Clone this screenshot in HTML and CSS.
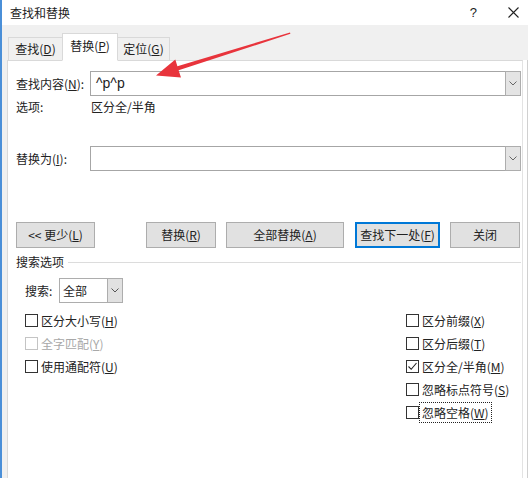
FILE: index.html
```html
<!DOCTYPE html>
<html lang="zh-CN">
<head>
<meta charset="utf-8">
<title>查找和替换</title>
<link rel="stylesheet" href="styles.css">
</head>
<body>
<div class="window">
  <div class="dlg">
    <div class="titlebar">
      <span class="title">查找和替换</span>
      <span class="help">?</span>
      <span class="close"><svg width="11" height="11" viewBox="0 0 11 11"><path d="M0.5 0.5L10.5 10.5M10.5 0.5L0.5 10.5" stroke="#222" stroke-width="1.1" fill="none"/></svg></span>
    </div>
    <div class="tabband">
      <div class="tab t1">查找(<u>D</u>)</div>
      <div class="tab t2 active">替换(<u>P</u>)</div>
      <div class="tab t3">定位(<u>G</u>)</div>
    </div>
    <div class="body-area">
      <div class="gutter"></div>
      <div class="page">
        <div class="field-row find">
          <span class="flabel">查找内容(<u>N</u>):</span>
          <div class="combo">
            <span class="combo-text">^p^p</span>
            <span class="combo-btn"><svg width="8" height="5" viewBox="0 0 8 5"><path d="M0.5 0.5L4 4L7.5 0.5" stroke="#666" stroke-width="1" fill="none"/></svg></span>
          </div>
        </div>
        <div class="opts-row">
          <span class="flabel">选项:</span>
          <span class="opts-val">区分全/半角</span>
        </div>
        <div class="field-row replace">
          <span class="flabel">替换为(<u>I</u>):</span>
          <div class="combo">
            <span class="combo-text"></span>
            <span class="combo-btn"><svg width="8" height="5" viewBox="0 0 8 5"><path d="M0.5 0.5L4 4L7.5 0.5" stroke="#666" stroke-width="1" fill="none"/></svg></span>
          </div>
        </div>
        <div class="btn-row">
          <div class="btn b-less">&lt;&lt; 更少(<u>L</u>)</div>
          <div class="btn b-rep">替换(<u>R</u>)</div>
          <div class="btn b-all">全部替换(<u>A</u>)</div>
          <div class="btn b-next">查找下一处(<u>F</u>)</div>
          <div class="btn b-close">关闭</div>
        </div>
        <div class="legend">
          <span class="legend-text">搜索选项</span>
          <span class="rule"></span>
        </div>
        <div class="search-row">
          <span class="slabel">搜索:</span>
          <div class="select">
            <span class="select-text">全部</span>
            <span class="select-btn"><svg width="8" height="5" viewBox="0 0 8 5"><path d="M0.5 0.5L4 4L7.5 0.5" stroke="#555" stroke-width="1" fill="none"/></svg></span>
          </div>
        </div>
        <div class="checks">
          <div class="col left">
            <div class="chk"><span class="box"></span><span class="ctext">区分大小写(<u>H</u>)</span></div>
            <div class="chk disabled"><span class="box"></span><span class="ctext">全字匹配(<u>Y</u>)</span></div>
            <div class="chk"><span class="box"></span><span class="ctext">使用通配符(<u>U</u>)</span></div>
          </div>
          <div class="col right">
            <div class="chk"><span class="box"></span><span class="ctext">区分前缀(<u>X</u>)</span></div>
            <div class="chk"><span class="box"></span><span class="ctext">区分后缀(<u>T</u>)</span></div>
            <div class="chk"><span class="box checked"><svg width="11" height="11" viewBox="0 0 11 11"><path d="M1.5 5.5L4.2 8.3L9.5 2" stroke="#222" stroke-width="1.1" fill="none"/></svg></span><span class="ctext">区分全/半角(<u>M</u>)</span></div>
            <div class="chk"><span class="box"></span><span class="ctext">忽略标点符号(<u>S</u>)</span></div>
            <div class="chk"><span class="box"></span><span class="ctext focus">忽略空格(<u>W</u>)</span></div>
          </div>
        </div>
      </div>
      <div class="rgutter"></div>
    </div>
  </div>
</div>
<svg class="arrow" width="528" height="478" viewBox="0 0 528 478">
  <polygon fill="#e8343c" points="156,75.5 175.3,59.5 177.4,66.3 290,32.6 290.4,33.8 178.6,70.3 181,77.5"/>
</svg>
</body>
</html>
```

FILE: styles.css
```css
html, body {
  margin: 0;
  padding: 0;
}
body {
  width: 528px;
  height: 478px;
  overflow: hidden;
  background: #fff;
  font-family: "Noto Sans CJK SC", "Noto Sans", sans-serif;
  font-size: 12px;
  line-height: 16px;
  color: #222;
}
u {
  text-decoration: underline;
  text-underline-offset: 1px;
}
.window {
  display: flex;
  height: 478px;
  border-left: 2px solid #4a8fd8;
}
.dlg {
  flex: 1;
  display: flex;
  flex-direction: column;
}
.titlebar {
  height: 25px;
  display: flex;
  align-items: center;
  padding-left: 8px;
  background: #fff;
}
.title {
  flex: 1;
  font-size: 12px;
}
.help {
  font-family: "Liberation Sans", sans-serif;
  font-size: 13px;
  color: #222;
  margin-right: 31px;
}
.close {
  display: flex;
  margin-right: 9px;
}
.tabband {
  height: 35px;
  background: #f0f0f0;
  display: flex;
  align-items: flex-end;
  padding-left: 6px;
}
.tab {
  position: relative;
  z-index: 1;
  height: 24px;
  margin-bottom: -1px;
  box-sizing: border-box;
  border: 1px solid #d9d9d9;
  background: #f0f0f0;
  display: flex;
  align-items: center;
  justify-content: center;
}
.t1 { width: 54px; border-right: none; }
.t2 { width: 56px; }
.t3 { width: 52px; border-left: none; }
.tab.active {
  height: 28px;
  background: #fff;
  border-bottom: 1px solid #fff;
  padding-bottom: 2px;
}
.body-area {
  flex: 1;
  display: flex;
}
.gutter {
  width: 5px;
  background: #f0f0f0;
}
.rgutter {
  width: 4px;
  background: #fff;
  border-right: 1px solid #d0d0d0;
}
.page {
  flex: 1;
  background: #fff;
  border-top: 1px solid #d9d9d9;
  border-left: 1px solid #d9d9d9;
  border-right: 1px solid #e3e3e3;
  padding: 0 1px 0 8px;
  display: flex;
  flex-direction: column;
}
.field-row {
  display: flex;
  align-items: center;
  height: 25px;
}
.field-row.find { margin-top: 10px; }
.field-row.replace { margin-top: 30px; }
.flabel {
  width: 74px;
  flex: none;
}
.combo {
  flex: 1;
  height: 25px;
  box-sizing: border-box;
  border: 1px solid #a6a6a6;
  display: flex;
  align-items: stretch;
  background: #fff;
}
.combo-text {
  flex: 1;
  padding-left: 5px;
  font-family: "Liberation Sans", sans-serif;
  font-size: 14px;
  line-height: 23px;
}
.combo-btn {
  width: 16px;
  box-sizing: border-box;
  margin: -1px -1px -1px 0;
  border: 1px solid #adadad;
  background: #e4e4e4;
  display: flex;
  align-items: center;
  justify-content: center;
}
.opts-row {
  margin-top: 2px;
  height: 18px;
  display: flex;
  align-items: center;
}
.opts-row .flabel { width: 75px; }
.btn-row {
  margin-top: 51px;
  display: flex;
  height: 26px;
}
.btn {
  height: 26px;
  box-sizing: border-box;
  border: 1px solid #adadad;
  background: #e1e1e1;
  display: flex;
  align-items: center;
  justify-content: center;
}
.b-less { width: 79px; }
.b-rep { width: 70px; margin-left: 51px; }
.b-all { width: 118px; margin-left: 10px; }
.b-next {
  width: 85px;
  margin-left: 11px;
  border-color: #0078d7;
  box-shadow: inset 0 0 0 1px #0078d7;
}
.b-close { width: 70px; margin-left: 10px; }
.legend {
  margin-top: 6px;
  height: 16px;
  display: flex;
  align-items: center;
}
.legend-text { margin-right: 4px; }
.rule {
  flex: 1;
  height: 1px;
  background: #dcdcdc;
}
.search-row {
  margin-top: 8px;
  height: 25px;
  display: flex;
  align-items: center;
  padding-left: 9px;
}
.slabel { width: 34px; }
.select {
  width: 64px;
  height: 25px;
  box-sizing: border-box;
  border: 1px solid #adadad;
  display: flex;
  align-items: stretch;
}
.select-text {
  flex: 1;
  padding-left: 3px;
  line-height: 23px;
}
.select-btn {
  width: 16px;
  box-sizing: border-box;
  margin: -1px -1px -1px 0;
  border: 1px solid #adadad;
  background: #e1e1e1;
  display: flex;
  align-items: center;
  justify-content: center;
}
.checks {
  margin-top: 6px;
  padding-left: 9px;
  display: grid;
  grid-template-columns: 381px 1fr;
}
.col {
  display: flex;
  flex-direction: column;
}
.chk {
  height: 23px;
  display: flex;
  align-items: center;
}
.box {
  width: 13px;
  height: 13px;
  box-sizing: border-box;
  border: 1px solid #333;
  background: #fff;
  display: flex;
  align-items: center;
  justify-content: center;
  flex: none;
}
.ctext {
  border: 1px solid transparent;
  padding: 1px 2px;
  line-height: 17px;
}
.ctext.focus {
  border: 1px dotted #222;
}
.chk.disabled .box { border-color: #c4c4c4; }
.chk.disabled .ctext { color: #a8a8a8; }
.arrow {
  position: absolute;
  left: 0;
  top: 0;
  pointer-events: none;
}
```
